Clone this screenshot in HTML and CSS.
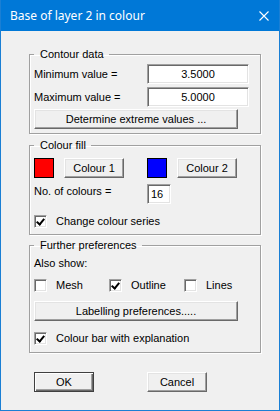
FILE: index.html
```html
<!DOCTYPE html>
<html lang="en">
<head>
    <meta charset="UTF-8">
    <title>Base of layer 2 in colour</title>
    <link rel="stylesheet" href="styles.css">
</head>
<body>
    <div class="window">
        <div class="titlebar">
            <span class="title">Base of layer 2 in colour</span>
            <svg class="close" width="10" height="10" viewBox="0 0 10 10">
                <path d="M0.5 0.5 L9.5 9.5 M9.5 0.5 L0.5 9.5" stroke="#fff" stroke-width="1.1" fill="none"/>
            </svg>
        </div>

        <div class="dialog">
            <fieldset class="group contour">
                <legend>Contour data</legend>
                <div class="field-row first">
                    <span class="label">Minimum value =</span>
                    <input class="edit num" type="text" value="3.5000" readonly>
                </div>
                <div class="field-row second">
                    <span class="label">Maximum value =</span>
                    <input class="edit num" type="text" value="5.0000" readonly>
                </div>
                <button class="btn wide">Determine extreme values ...</button>
            </fieldset>

            <fieldset class="group colours">
                <legend>Colour fill</legend>
                <div class="swatch-row">
                    <div class="swatch-cell">
                        <span class="swatch red"></span>
                        <button class="btn small">Colour 1</button>
                    </div>
                    <div class="swatch-cell">
                        <span class="swatch blue"></span>
                        <button class="btn small">Colour 2</button>
                    </div>
                </div>
                <div class="count-row">
                    <span class="label">No. of colours =</span>
                    <input class="edit count" type="text" value="16" readonly>
                </div>
                <label class="check-row series">
                    <span class="checkbox checked"></span>
                    <span>Change colour series</span>
                </label>
            </fieldset>

            <fieldset class="group further">
                <legend>Further preferences</legend>
                <div class="also">Also show:</div>
                <div class="show-row">
                    <label class="check-row">
                        <span class="checkbox"></span>
                        <span>Mesh</span>
                    </label>
                    <label class="check-row">
                        <span class="checkbox checked"></span>
                        <span>Outline</span>
                    </label>
                    <label class="check-row">
                        <span class="checkbox"></span>
                        <span>Lines</span>
                    </label>
                </div>
                <button class="btn wide labelling">Labelling preferences.....</button>
                <label class="check-row colourbar">
                    <span class="checkbox checked"></span>
                    <span>Colour bar with explanation</span>
                </label>
            </fieldset>

            <div class="actions">
                <button class="btn small default">OK</button>
                <button class="btn small">Cancel</button>
            </div>
        </div>
    </div>
</body>
</html>
```

FILE: styles.css
```css
body {
    margin: 0;
    font-family: "Liberation Sans", Arial, sans-serif;
    font-size: 11px;
    color: #000;
    background-color: #f0f0f0;
}

.window {
    width: 280px;
    height: 411px;
    box-sizing: border-box;
    background-color: #f0f0f0;
    border: 1px solid #1a7fd4;
    border-top: none;
    overflow: hidden;
}

.titlebar {
    height: 31px;
    margin: 0 -1px;
    background-color: #0078d7;
    color: white;
    display: flex;
    align-items: center;
    justify-content: space-between;
    padding: 0 11px 0 10px;
}

.title {
    font-family: "Noto Sans", sans-serif;
    font-size: 12px;
    line-height: 16px;
}

.close {
    display: block;
}

.dialog {
    padding: 17px 0 0 28px;
}

/* group boxes */
.group {
    width: 232px;
    box-sizing: border-box;
    margin: 0;
    padding: 3px 4px 4px 4px;
    min-width: 0;
    border: 1px solid #a0a0a0;
    box-shadow: inset 1px 1px 0 #fff, 1px 1px 0 #fff;
}

.group legend {
    font-size: 11px;
    line-height: 13px;
    padding: 0 5px 0 6px;
    margin-left: 0;
}

.colours {
    margin-top: 5px;
}

.further {
    margin-top: 4px;
}

.label {
    white-space: nowrap;
}

/* contour data */
.field-row {
    display: grid;
    grid-template-columns: 113px 102px;
    align-items: center;
    height: 20px;
}

.field-row.first {
    margin-bottom: 3px;
}

.field-row.second {
    margin-bottom: 2px;
}

/* edit boxes */
.edit {
    box-sizing: border-box;
    height: 20px;
    margin: 0;
    padding: 0 2px;
    font-family: "Liberation Sans", Arial, sans-serif;
    font-size: 11px;
    color: #000;
    background-color: white;
    border: 1px solid;
    border-color: #a0a0a0 #fff #fff #a0a0a0;
    box-shadow: inset 1px 1px 0 #696969, inset -1px -1px 0 #e3e3e3;
    outline: none;
}

.edit.num {
    width: 102px;
    text-align: center;
}

.edit.count {
    width: 24px;
    padding-left: 3px;
}

/* buttons */
.btn {
    box-sizing: border-box;
    height: 20px;
    margin: 0;
    padding: 0;
    font-family: "Liberation Sans", Arial, sans-serif;
    font-size: 11px;
    color: #000;
    background-color: #f0f0f0;
    border: 1px solid;
    border-color: #fff #696969 #696969 #fff;
    box-shadow: inset -1px -1px 0 #a0a0a0, inset 1px 1px 0 #e3e3e3;
    display: block;
}

.btn.wide {
    width: 204px;
}

.btn.small {
    width: 60px;
}

.btn.default {
    border: 1px solid #404040;
    box-shadow: inset 1px 1px 0 #fff, inset -1px -1px 0 #696969, inset -2px -2px 0 #a0a0a0;
}

/* colour fill */
.swatch-row {
    display: grid;
    grid-template-columns: 113px 100px;
    margin-top: 3px;
}

.swatch-cell {
    display: flex;
    align-items: center;
    gap: 10px;
}

.swatch {
    display: block;
    width: 20px;
    height: 20px;
    box-sizing: border-box;
    border: 1px solid #000;
}

.swatch.red {
    background-color: #ff0000;
}

.swatch.blue {
    background-color: #0000ff;
}

.count-row {
    display: grid;
    grid-template-columns: 113px 24px;
    align-items: start;
    margin-top: 6px;
    line-height: 15px;
}

/* checkboxes */
.check-row {
    display: flex;
    align-items: center;
    gap: 9px;
    height: 13px;
    line-height: 13px;
    white-space: nowrap;
}

.checkbox {
    display: block;
    position: relative;
    width: 13px;
    height: 13px;
    box-sizing: border-box;
    background-color: white;
    border: 1px solid;
    border-color: #a0a0a0 #fff #fff #a0a0a0;
    box-shadow: inset 1px 1px 0 #696969, inset -1px -1px 0 #e3e3e3;
    flex-shrink: 0;
}

.checkbox.checked::after {
    content: "";
    position: absolute;
    left: 3px;
    top: 1px;
    width: 3px;
    height: 6px;
    border: solid #000;
    border-width: 0 2px 2px 0;
    transform: rotate(40deg);
    transform-origin: center;
}

.check-row.series {
    margin-top: 11px;
    margin-bottom: 2px;
}

/* further preferences */
.also {
    margin-top: 2px;
    line-height: 13px;
}

.show-row {
    display: grid;
    grid-template-columns: 75px 75px 60px;
    margin-top: 9px;
}

.labelling {
    margin-top: 9px;
}

.check-row.colourbar {
    margin-top: 11px;
    margin-bottom: 3px;
}

.actions {
    display: grid;
    grid-template-columns: 113px 60px;
    padding-left: 5px;
    margin-top: 19px;
}
```
